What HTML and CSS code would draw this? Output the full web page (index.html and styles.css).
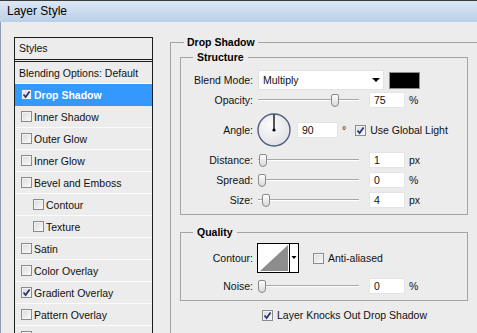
FILE: index.html
```html
<!DOCTYPE html>
<html lang="en">

<head>
    <meta charset="UTF-8">
    <meta name="viewport" content="width=device-width, initial-scale=1.0">
    <title>Layer Style</title>
    <link rel="stylesheet" href="styles.css">
</head>

<body>
    <div class="window">
        <div class="titlebar">Layer Style</div>

        <div class="main">
            <div class="styles">
                <div class="list-head">Styles</div>
                <div class="item plain">Blending Options: Default</div>
                <div class="item selected">
                    <span class="check"><svg viewBox="0 0 9 9"><path d="M1.5 4.5 L3.6 7 L7.6 1.4" /></svg></span>Drop Shadow
                </div>
                <div class="item"><span class="check"></span>Inner Shadow</div>
                <div class="item"><span class="check"></span>Outer Glow</div>
                <div class="item"><span class="check"></span>Inner Glow</div>
                <div class="item"><span class="check"></span>Bevel and Emboss</div>
                <div class="item sub"><span class="check"></span>Contour</div>
                <div class="item sub"><span class="check"></span>Texture</div>
                <div class="item"><span class="check"></span>Satin</div>
                <div class="item"><span class="check"></span>Color Overlay</div>
                <div class="item">
                    <span class="check"><svg viewBox="0 0 9 9"><path d="M1.5 4.5 L3.6 7 L7.6 1.4" /></svg></span>Gradient Overlay
                </div>
                <div class="item"><span class="check"></span>Pattern Overlay</div>
                <div class="item"><span class="check"></span>Stroke</div>
            </div>

            <fieldset class="effect">
                <legend>Drop Shadow</legend>

                <fieldset class="group structure">
                    <legend>Structure</legend>

                    <div class="row first">
                        <span class="label">Blend Mode:</span>
                        <div class="select">Multiply<span class="arrow"></span></div>
                        <span class="swatch"></span>
                    </div>

                    <div class="row">
                        <span class="label">Opacity:</span>
                        <div class="slider"><span class="thumb" style="left: 73px"></span></div>
                        <span class="field">75</span>
                        <span class="unit">%</span>
                    </div>

                    <div class="row angle">
                        <span class="label">Angle:</span>
                        <svg class="dial" width="34" height="34" viewBox="0 0 34 34">
                            <defs>
                                <radialGradient id="dialfill" cx="40%" cy="35%" r="70%">
                                    <stop offset="0" stop-color="#fbfbfb" />
                                    <stop offset="1" stop-color="#dfe0e6" />
                                </radialGradient>
                            </defs>
                            <circle cx="17" cy="17" r="16" fill="url(#dialfill)" stroke="#4f5d80" stroke-width="1.4" />
                            <line x1="17" y1="17" x2="17" y2="1.5" stroke="#000" stroke-width="1.3" />
                            <circle cx="17" cy="17" r="1.6" fill="#000" />
                        </svg>
                        <span class="field wide">90</span>
                        <span class="deg">°</span>
                        <span class="check gap"><svg viewBox="0 0 9 9"><path d="M1.5 4.5 L3.6 7 L7.6 1.4" /></svg></span>
                        <span class="check-label">Use Global Light</span>
                    </div>

                    <div class="row">
                        <span class="label">Distance:</span>
                        <div class="slider"><span class="thumb" style="left: 1px"></span></div>
                        <span class="field">1</span>
                        <span class="unit">px</span>
                    </div>

                    <div class="row">
                        <span class="label">Spread:</span>
                        <div class="slider"><span class="thumb" style="left: 0px"></span></div>
                        <span class="field">0</span>
                        <span class="unit">%</span>
                    </div>

                    <div class="row">
                        <span class="label">Size:</span>
                        <div class="slider"><span class="thumb" style="left: 4px"></span></div>
                        <span class="field">4</span>
                        <span class="unit">px</span>
                    </div>
                </fieldset>

                <fieldset class="group quality">
                    <legend>Quality</legend>

                    <div class="row contour-row">
                        <span class="label">Contour:</span>
                        <svg class="contour" width="42" height="30" viewBox="0 0 42 30">
                            <rect x="0.5" y="0.5" width="41" height="29" fill="#fff" stroke="#000" />
                            <polygon points="3,28 31,2 31,28" fill="#8d8d8d" />
                            <line x1="32.5" y1="0.5" x2="32.5" y2="29.5" stroke="#000" />
                            <polygon points="34.5,13 39.5,13 37,16" fill="#000" />
                        </svg>
                        <span class="check wide-gap"></span>
                        <span class="check-label">Anti-aliased</span>
                    </div>

                    <div class="row noise">
                        <span class="label">Noise:</span>
                        <div class="slider"><span class="thumb" style="left: 0px"></span></div>
                        <span class="field">0</span>
                        <span class="unit">%</span>
                    </div>
                </fieldset>

                <div class="row knock">
                    <span class="check"><svg viewBox="0 0 9 9"><path d="M1.5 4.5 L3.6 7 L7.6 1.4" /></svg></span>
                    <span class="check-label">Layer Knocks Out Drop Shadow</span>
                </div>
            </fieldset>
        </div>
    </div>
</body>

</html>
```

FILE: styles.css
```css
* {
    margin: 0;
    padding: 0;
    box-sizing: border-box;
}

body {
    font-family: "Liberation Sans", Arial, sans-serif;
    font-size: 10.5px;
    color: #111;
    background: #ececec;
}

.window {
    width: 477px;
    height: 333px;
    overflow: hidden;
    background: #ececec;
}

.titlebar {
    height: 22px;
    padding-left: 7px;
    line-height: 21px;
    font-size: 12px;
    color: #000;
    border-top: 1px solid #3a3a3a;
    background: linear-gradient(#dde8f5, #bacfe7);
}

.main {
    display: flex;
    align-items: flex-start;
    height: 311px;
    padding-left: 13px;
    border-left: 1px solid #8e9bb0;
}

/* left list */

.styles {
    flex: none;
    width: 139px;
    margin-top: 15px;
    border: 1px solid #1e1e1e;
    border-bottom: none;
}

.list-head {
    height: 24px;
    padding-left: 4px;
    line-height: 21px;
    border-bottom: 3px double #1e1e1e;
}

.item {
    display: flex;
    align-items: center;
    height: 22px;
    padding-left: 6px;
    border-bottom: 1px solid #fbfbfb;
    white-space: nowrap;
}

.item.plain {
    padding-left: 4px;
}

.item.sub {
    padding-left: 18px;
}

.item.selected {
    background: #3399ff;
    border-bottom-color: #3399ff;
    color: #fff;
    font-weight: bold;
}

.check {
    flex: none;
    display: inline-flex;
    align-items: center;
    justify-content: center;
    width: 11px;
    height: 11px;
    margin-right: 2px;
    border: 1px solid #8b8b8b;
    background: linear-gradient(135deg, #d8d8d8, #fbfbfb);
    box-shadow: inset 0 0 0 1px #f3f3f3;
}

.check svg {
    width: 9px;
    height: 9px;
}

.check path {
    fill: none;
    stroke: #26367f;
    stroke-width: 1.8;
}

/* right side */

fieldset {
    border: 1px solid #a3a3a3;
    min-width: 0;
}

legend {
    margin-left: 4px;
    padding: 0 3px;
    line-height: 14px;
    font-weight: bold;
    color: #000;
}

.effect {
    flex: none;
    width: 320px;
    height: 330px;
    margin: 13px 0 0 17px;
    padding: 0 0 0 9px;
}

.group {
    width: 288px;
    padding: 0 0 4px 0;
}

.group legend {
    margin-left: 12px;
    padding: 0 4px;
}

.structure {
    margin-top: 1px;
}

.quality {
    margin-top: 10px;
}

.row {
    display: flex;
    align-items: center;
    height: 20px;
    white-space: nowrap;
}

.row.first {
    margin-top: 6px;
}

.row.angle {
    height: 40px;
}

.label {
    flex: none;
    width: 72px;
    text-align: right;
}

.select {
    display: flex;
    align-items: center;
    justify-content: space-between;
    width: 126px;
    height: 20px;
    margin-left: 5px;
    padding: 0 3px 0 4px;
    background: #fff;
    border: 1px solid #e2e2e2;
}

.select .arrow {
    width: 0;
    height: 0;
    border-left: 4px solid transparent;
    border-right: 4px solid transparent;
    border-top: 4px solid #000;
}

.swatch {
    width: 31px;
    height: 17px;
    margin-left: 5px;
    background: #000;
    border: 1px solid #8c8c8c;
}

.slider {
    position: relative;
    flex: none;
    width: 101px;
    height: 20px;
    margin-left: 5px;
}

.slider::before {
    content: "";
    position: absolute;
    left: 0;
    right: 0;
    top: 9px;
    border-top: 1px solid #a8a8a8;
    border-bottom: 1px solid #fff;
}

.thumb {
    position: absolute;
    top: 4px;
    width: 8px;
    height: 13px;
    border: 1px solid #8a8a8a;
    border-radius: 2px 2px 4px 4px;
    background: linear-gradient(#fdfdfd, #d9d9d9);
}

.field {
    flex: none;
    width: 36px;
    height: 16px;
    margin-left: 10px;
    padding-left: 4px;
    line-height: 14px;
    background: #fff;
    border: 1px solid #e4e4e4;
}

.field.wide {
    width: 41px;
    margin-left: 6px;
}

.unit {
    margin-left: 4px;
}

.dial {
    flex: none;
    margin-left: 4px;
}

.deg {
    margin-left: 4px;
}

.check.gap {
    margin-left: 9px;
}

.check-label {
    margin-left: 2px;
}

.row.contour-row {
    height: 30px;
    margin-top: 4px;
}

.contour {
    flex: none;
    margin-left: 4px;
}

.check.wide-gap {
    margin-left: 14px;
}

.row.noise {
    margin-top: 3px;
}

.row.knock {
    margin-top: 4px;
    padding-left: 82px;
}
```
